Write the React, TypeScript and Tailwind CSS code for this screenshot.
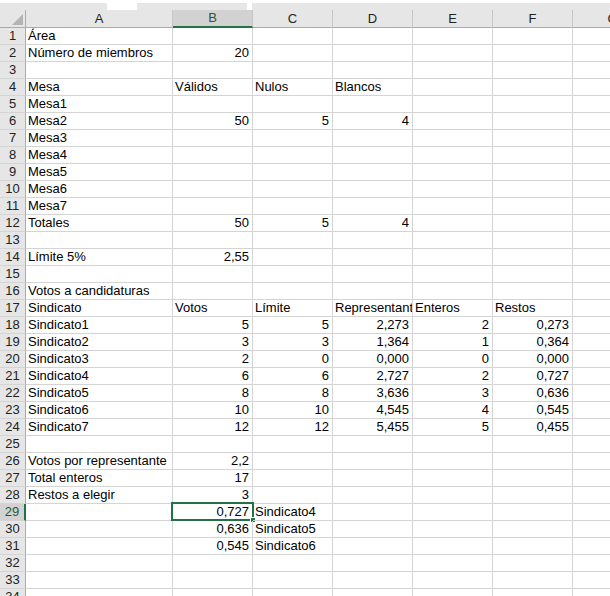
import React from 'react';

const COLS = ['A', 'B', 'C', 'D', 'E', 'F', 'G'];
const SEL_COL = 1; // B
const SEL_ROW = 29;

// sheet contents, one array per row (A..F)
const DATA: Record<number, string[]> = {
  1: ['Área'],
  2: ['Número de miembros', '20'],
  4: ['Mesa', 'Válidos', 'Nulos', 'Blancos'],
  5: ['Mesa1'],
  6: ['Mesa2', '50', '5', '4'],
  7: ['Mesa3'],
  8: ['Mesa4'],
  9: ['Mesa5'],
  10: ['Mesa6'],
  11: ['Mesa7'],
  12: ['Totales', '50', '5', '4'],
  14: ['Límite 5%', '2,55'],
  16: ['Votos a candidaturas'],
  17: ['Sindicato', 'Votos', 'Límite', 'Representant', 'Enteros', 'Restos'],
  18: ['Sindicato1', '5', '5', '2,273', '2', '0,273'],
  19: ['Sindicato2', '3', '3', '1,364', '1', '0,364'],
  20: ['Sindicato3', '2', '0', '0,000', '0', '0,000'],
  21: ['Sindicato4', '6', '6', '2,727', '2', '0,727'],
  22: ['Sindicato5', '8', '8', '3,636', '3', '0,636'],
  23: ['Sindicato6', '10', '10', '4,545', '4', '0,545'],
  24: ['Sindicato7', '12', '12', '5,455', '5', '0,455'],
  26: ['Votos por representante', '2,2'],
  27: ['Total enteros', '17'],
  28: ['Restos a elegir', '3'],
  29: ['', '0,727', 'Sindicato4'],
  30: ['', '0,636', 'Sindicato5'],
  31: ['', '0,545', 'Sindicato6'],
};

const isNum = (s: string) => /^[\d,]+$/.test(s);

// G is a full 80px column, cut off by the window edge
const gridCols = 'grid-cols-[26px_147px_80px_80px_80px_80px_80px_80px]';

function Cell({ value, selected }: { value: string; selected: boolean }) {
  return (
    <div
      className={`relative h-[17px] border-b border-r border-[#d4d4d4] pl-[2px] pr-[3px] text-[13px] leading-[16px] whitespace-nowrap ${
        isNum(value) ? 'text-right' : 'text-left'
      } ${selected ? 'overflow-visible' : 'overflow-hidden'}`}
    >
      {value}
      {selected && (
        <div className="pointer-events-none absolute -left-[2px] -top-[2px] h-[19px] w-[83px] border-2 border-[#217346]">
          <div className="absolute -bottom-[4px] -right-[4px] size-[6px] border border-white bg-[#217346]" />
        </div>
      )}
    </div>
  );
}

export default function App() {
  const rows = Array.from({ length: 34 }, (_, i) => i + 1);
  return (
    <div
      className="h-[596px] w-[610px] overflow-hidden bg-white text-black"
      style={{ fontFamily: '"Liberation Sans", Arial, sans-serif' }}
    >
      {/* strip above the column headers */}
      <div className="flex h-[10px] bg-[#e6e6e6]">
        <div className="w-[107px] border-t-[3px] border-white" />
        <div className="w-[30px] bg-white" />
        <div className="w-[110px] border-t-[3px] border-white" />
        <div className="w-[5px] bg-white" />
        <div className="flex-1 border-t-[3px] border-white" />
      </div>

      <div className={`grid w-max ${gridCols}`}>
        {/* corner */}
        <div className="relative h-[18px] border-b border-r border-[#ababab] bg-[#e6e6e6]">
          <svg className="absolute bottom-[2px] right-[2px]" width="11" height="11" viewBox="0 0 11 11">
            <path d="M11 0 L11 11 L0 11 Z" fill="#b4b4b4" />
          </svg>
        </div>
        {COLS.map((c, i) =>
          i === SEL_COL ? (
            <div
              key={c}
              className="h-[18px] border-b-2 border-r border-b-[#217346] border-r-[#c6c6c6] bg-[#d2d2d2] text-center text-[13px] leading-[16px] text-[#1f5c3b]"
            >
              {c}
            </div>
          ) : (
            <div
              key={c}
              className="h-[18px] border-b border-r border-b-[#ababab] border-r-[#c6c6c6] bg-[#e6e6e6] text-center text-[13px] leading-[17px] text-[#222]"
            >
              {c}
            </div>
          ),
        )}

        {rows.map((r) => {
          const vals = DATA[r] ?? [];
          const rowSel = r === SEL_ROW;
          return (
            <React.Fragment key={r}>
              <div
                className={`h-[17px] border-b border-r border-b-[#d4d4d4] text-center text-[13px] leading-[16px] ${
                  rowSel
                    ? 'border-r-2 border-r-[#217346] bg-[#d2d2d2] text-[#1f5c3b]'
                    : 'border-r-[#ababab] bg-[#e6e6e6] text-[#222]'
                }`}
              >
                {r}
              </div>
              {COLS.map((c, i) => (
                <Cell key={c} value={vals[i] ?? ''} selected={rowSel && i === SEL_COL} />
              ))}
            </React.Fragment>
          );
        })}
      </div>
    </div>
  );
}
